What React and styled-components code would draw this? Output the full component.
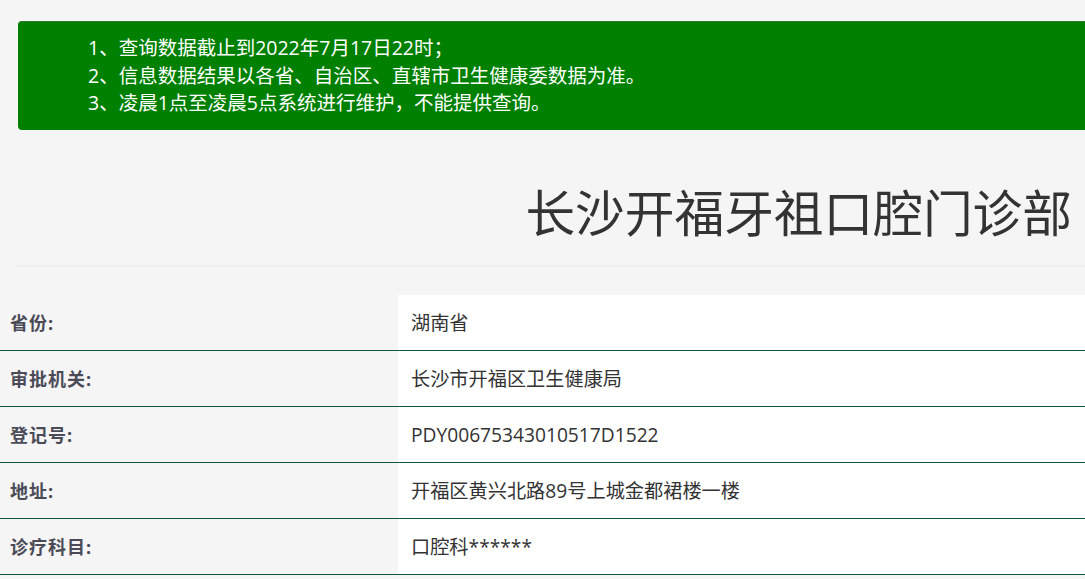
import styled, { createGlobalStyle } from "styled-components";

const GlobalStyle = createGlobalStyle`
    html, body {
        margin: 0;
        padding: 0;
        background: #f5f5f5;
        font-family: "Open Sans", "Noto Sans CJK SC", sans-serif;
        overflow: hidden;
    }
`

const Page = styled.div`
    width: 1085px;
    padding-top: 21px;
`

const Notice = styled.div`
    margin-left: 18px;
    background-color: #008000;
    border-top: 1px solid #2d7a2d;
    border-radius: 4px 0 0 4px;
    color: #ffffff;
    font-size: 19.5px;
    line-height: 27.5px;
    padding: 12px 0 13px 70px;
`

const NoticeLine = styled.p`
    margin: 0;
    white-space: nowrap;
`

const Header = styled.div`
    margin-left: 16px;
    padding: 56px 13px 25px 0;
    border-bottom: 2px solid #eeeeee;
    text-align: right;
`

const Title = styled.h1`
    margin: 0;
    font-size: 49.7px;
    font-weight: 400;
    line-height: 54px;
    color: #333333;
    white-space: nowrap;
`

const Table = styled.div`
    margin-top: 28px;
    display: flex;
    flex-direction: column;
`

const Row = styled.div`
    display: grid;
    grid-template-columns: 398px 1fr;
    height: 55px;
    border-bottom: 1px solid #0f5a36;
`

const Label = styled.div`
    display: flex;
    align-items: center;
    padding-left: 10px;
    background: #f5f5f5;
    font-size: 18px;
    font-weight: 700;
    letter-spacing: 1px;
    color: #4b4b57;
`

const Value = styled.div`
    display: flex;
    align-items: center;
    padding-left: 13px;
    background: #ffffff;
    font-size: 19.2px;
    color: #333333;
`

const notices = [
    "1、查询数据截止到2022年7月17日22时；",
    "2、信息数据结果以各省、自治区、直辖市卫生健康委数据为准。",
    "3、凌晨1点至凌晨5点系统进行维护，不能提供查询。",
];

const rows = [
    ["省份:", "湖南省"],
    ["审批机关:", "长沙市开福区卫生健康局"],
    ["登记号:", "PDY00675343010517D1522"],
    ["地址:", "开福区黄兴北路89号上城金都裙楼一楼"],
    ["诊疗科目:", "口腔科******"],
];

function App() {
    return (
        <Page>
            <GlobalStyle />
            <Notice>
                {notices.map((n) => (
                    <NoticeLine key={n}>{n}</NoticeLine>
                ))}
            </Notice>
            <Header>
                <Title>长沙开福牙祖口腔门诊部</Title>
            </Header>
            <Table>
                {rows.map(([label, value]) => (
                    <Row key={label}>
                        <Label>{label}</Label>
                        <Value>{value}</Value>
                    </Row>
                ))}
            </Table>
        </Page>
    );
}

export default App;
